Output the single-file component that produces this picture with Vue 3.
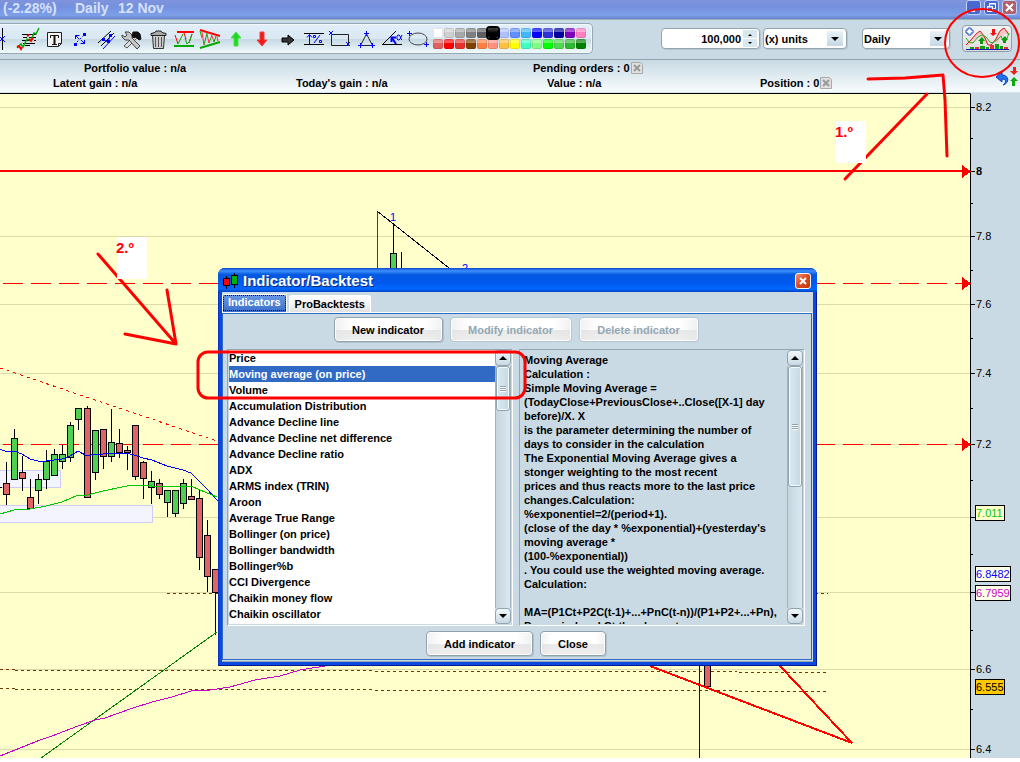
<script setup>
import { ref } from 'vue'

const quantity = ref('100,000')
const unit = ref('(x) units')
const period = ref('Daily')
const selected = ref('Moving average (on price)')
const colour = ref('#000000')

const palette = [
  '#ffffff', '#d0d0d0', '#a8a8a8', '#808080', '#606060', '#000000', '#b0c0ff',
  '#6090ff', '#40b8ff', '#0000ff', '#3030d8', '#0000a0', '#8000c0', '#ff80c0',
  '#e06060', '#ff0000', '#e83030', '#804000', '#ff8040', '#ff9080', '#ffc040',
  '#ffff00', '#40ffc0', '#80ff80', '#00ff00', '#50d850', '#30b830', '#008000',
]

const indicators = [
  'Price', 'Moving average (on price)', 'Volume', 'Accumulation Distribution',
  'Advance Decline line', 'Advance Decline net difference', 'Advance Decline ratio',
  'ADX', 'ARMS index (TRIN)', 'Aroon', 'Average True Range', 'Bollinger (on price)',
  'Bollinger bandwidth', 'Bollinger%b', 'CCI Divergence', 'Chaikin money flow',
  'Chaikin oscillator',
]

const description = [
  'Moving Average', 'Calculation :', 'Simple Moving Average =',
  '(TodayClose+PreviousClose+..Close([X-1] day', 'before)/X. X',
  'is the parameter determining the number of', 'days to consider in the calculation',
  'The Exponential Moving Average gives a', 'stonger weighting to the most recent',
  'prices and thus reacts more to the last price', 'changes.Calculation:',
  '%exponentiel=2/(period+1).', "(close of the day * %exponential)+(yesterday's",
  'moving average *', '(100-%exponential))', '. You could use the weighted moving average.',
  'Calculation:', '', 'MA=(P1Ct+P2C(t-1)+...+PnC(t-n))/(P1+P2+...+Pn),',
  'Pn=period and Ct the close at',
].join('\n')

const gridLines = [107, 236, 304, 373, 444, 517, 592, 669, 749]
const labels = [
  [107, '8.2'], [171, '8'], [236, '7.8'], [304, '7.6'], [373, '7.4'], [444, '7.2'],
  [669, '6.6'], [749, '6.4'],
]
const ticks = [107, 171, 236, 304, 373, 444, 517, 592, 669, 749]
const minorTicks = [138, 203, 270, 338, 408, 480, 554, 630, 709]
const tags = [
  { y: 505, w: 30, text: '7.011', fill: '#ffffcc', ink: '#00c800' },
  { y: 566, w: 36, text: '6.8482', fill: '#ffffe8', ink: '#0000ff' },
  { y: 585, w: 36, text: '6.7959', fill: '#ffffe8', ink: '#c800c8' },
  { y: 679, w: 30, text: '6.555', fill: '#ffc800', ink: '#000000' },
]

// x, high, low, body top, body bottom, rising
const candles = [
  [6, 462, 505, 483, 494, 0], [14, 429, 479, 438, 479, 1], [22, 456, 491, 472, 478, 0],
  [30, 479, 508, 497, 508, 0], [38, 474, 504, 479, 490, 1], [46, 450, 489, 461, 479, 1],
  [54, 449, 475, 454, 475, 1], [62, 445, 469, 454, 461, 1], [70, 422, 462, 425, 457, 1],
  [78, 408, 430, 408, 419, 1], [87, 406, 498, 408, 497, 0], [95, 430, 480, 430, 472, 1],
  [103, 429, 469, 429, 456, 0], [111, 409, 462, 442, 456, 1], [119, 429, 458, 443, 452, 0],
  [127, 446, 470, 450, 452, 0], [135, 425, 480, 425, 476, 0], [143, 461, 499, 462, 478, 0],
  [151, 471, 504, 481, 487, 1], [159, 479, 499, 483, 494, 0], [167, 490, 517, 490, 502, 1],
  [175, 490, 517, 490, 513, 1], [183, 479, 509, 483, 503, 1], [191, 479, 499, 496, 499, 0],
  [199, 490, 570, 498, 557, 0], [207, 520, 592, 535, 576, 0], [215, 569, 635, 569, 592, 0],
  [393, 224, 280, 253, 280, 1], [401, 252, 280, 270, 280, 1], [707, 660, 686, 660, 686, 0],
]

const tools = [
  'Crosshair', 'Sketch', 'Text', 'Segment', 'Parallel', 'Settings', 'Delete', 'Channel',
  'Wedge', 'Buy arrow', 'Sell arrow', 'Right arrow', 'Variation', 'Rectangle', 'Triangle',
  'Angle', 'Ellipse',
]
</script>

<template>
  <div class="page">
    <header class="titlebar">
      <span class="change">(-2.28%)</span>
      <span class="range">Daily</span>
      <span>12 Nov</span>
      <div class="win-buttons">
        <button type="button" aria-label="Minimize"><svg width="15" height="15"><path d="M4 11h5" stroke="#fff" stroke-width="2" /></svg></button>
        <button type="button" aria-label="Restore"><svg width="15" height="15" fill="none" stroke="#fff"><path d="M5.500 6V3.500h6v5h-2M5 4h7" /><path d="M3.500 6.500h5v5h-5zM3 7h6" /></svg></button>
        <button type="button" class="shut" aria-label="Close window"><svg width="15" height="15"><path d="M4 4l7 7M11 4l-7 7" stroke="#fff" stroke-width="2" /></svg></button>
      </div>
    </header>

    <div class="toolbar">
      <div class="tool-panel">
        <button v-for="(t, i) in tools" :key="t" type="button" class="tool" :aria-label="t">
          <svg viewBox="0 0 26 26" width="26" height="26" fill="none" stroke-width="1">
            <template v-if="i === 0">
              <path d="M13.500 2v22" stroke="#000" /><path d="M10 10l6 6M16 10l-6 6" stroke="#00f" />
            </template>
            <template v-else-if="i === 1">
              <path d="M7 8.500h14M8 11.500h4M14 11.500h7M7 14.500h10M19 14.500h2M8 17.500h12M10 19.500h5" stroke="#000" />
              <path d="M2 22l4-4 2 3 4-8 4 1 3-7 2 1 3-6" stroke="#0a0" stroke-width="1.500" />
              <path d="M2 21l2-1 2 3 1-2M14 13l2 2 2-3M12 10l2-1" stroke="#f00" stroke-width="2" />
            </template>
            <template v-else-if="i === 2">
              <path d="M6.500 6.500h14v11l-3 3h-11z" fill="#f4f4f4" stroke="#222" />
              <path d="M9.500 12V9.500h8V12M11 18.500h5" stroke="#111" /><path d="M13.500 9v9" stroke="#111" stroke-width="2" />
              <path d="M17.500 20v-2.500h3" stroke="#222" />
            </template>
            <template v-else-if="i === 3">
              <path d="M7 19L19 7" stroke="#00f" stroke-dasharray="2 2" />
              <path d="M7 17h3v3H7zM16 7h3v3h-3z" fill="#00f" />
              <path d="M8.500 9v4M8.500 9.500h4M8 9l4 4M17.500 18v-4M17.500 17.500h-4M18 18l-4-4" stroke="#00f" />
            </template>
            <template v-else-if="i === 4">
              <path d="M5 17L18 5M8 20L21 7" stroke="#000" /><path d="M10 23L22 10" stroke="#00f" />
              <path d="M9 12h3v3H9zM14 14h3v3h-3zM16 8h3v3h-3z" fill="#00f" /><path d="M11 14l4 2 2-6" stroke="#00f" />
            </template>
            <template v-else-if="i === 5">
              <path d="M5 20L16 9l3 2L8 22z" fill="#ddd" stroke="#555" />
              <path d="M6 6h4l3 3v3l8 8-3 3-8-9H6l-3-3V9l3 2 2-2z" fill="#c8c8c8" stroke="#444" />
              <path d="M14 6h5l2 2 1 5-2 1-3-3-2 1-2-2z" fill="#111" stroke="#111" />
            </template>
            <template v-else-if="i === 6">
              <path d="M7.500 9.500h12l-1 13h-10z" fill="#ccc" stroke="#333" />
              <path d="M10.500 11v10M13.500 11v10M16.500 11v10" stroke="#555" />
              <path d="M6 9.500V7.500l4-1 1-1.500h5l1 1.500 4 1v2z" fill="#aaa" stroke="#222" />
            </template>
            <template v-else-if="i === 7">
              <path d="M6 6h17" stroke="#f00" stroke-width="2" /><path d="M3 20h20" stroke="#0a0" stroke-width="2" />
              <path d="M4 9l3 9M13 7l2 6M21 8l-3 9" stroke="#f00" /><path d="M7 18l5-10M14 12l2 6 2-2M18 17l3-9" stroke="#0a0" />
            </template>
            <template v-else-if="i === 8">
              <path d="M3 4l20 6" stroke="#f00" stroke-width="2" /><path d="M3 22l20-6" stroke="#0a0" stroke-width="2" />
              <path d="M7 19l3-12M12 17l3-8M17 16l2-6M3 5l2 7" stroke="#0a0" /><path d="M5 6l2 13M10 8l2 9M15 10l2 6M20 11l1 4" stroke="#f33" />
            </template>
            <path v-else-if="i === 9" d="M13 6l5 6h-3v8h-4v-8H8z" fill="#20d820" stroke="#4ce04c" />
            <path v-else-if="i === 10" d="M13 20l5-6h-3V6h-4v8H8z" fill="#f01818" stroke="#f04040" />
            <path v-else-if="i === 11" d="M19 14l-6 5v-3H7v-4h6V9z" fill="#333" stroke="#000" />
            <template v-else-if="i === 12">
              <path d="M3 7.500h20M3 18.500h20" stroke="#000" />
              <path d="M8.500 18V9M6 11.500l2.500-3 2.500 3M13 17l6-8M12.500 9.500h2v2h-2zM18.500 14.500h2v2h-2z" stroke="#00f" />
            </template>
            <template v-else-if="i === 13">
              <path d="M4.500 8.500h17v11h-17z" stroke="#222" />
              <path d="M2 5l4 4M6 5l-4 4M19 16l4 4M23 16l-4 4" stroke="#00f" />
            </template>
            <template v-else-if="i === 14">
              <path d="M13.500 8l-6 11.500h12z" stroke="#222" />
              <path d="M13.500 5v5M11 7.500h5M7.500 17v5M5 19.500h5M19.500 17v5M17 19.500h5" stroke="#00f" />
            </template>
            <template v-else-if="i === 15">
              <path d="M3 18.500h20M4 18L17 5" stroke="#000" />
              <path d="M12.500 16v-4.500H17" stroke="#00f" stroke-width="2" /><path d="M13 12l4 6" stroke="#00f" stroke-width="2" />
              <path d="M23 9l-2 4-1 1h-1l-1-1v-3l1-1h1l1 1 1 3 1 1" stroke="#00f" />
            </template>
            <template v-else>
              <ellipse cx="13" cy="13" rx="9" ry="6" stroke="#444" stroke-width="1" />
              <path d="M4.500 5v5M2 7.500h5M21.500 16v5M19 18.500h5" stroke="#00f" />
            </template>
          </svg>
        </button>
        <div class="palette">
          <button
            v-for="c in palette" :key="c" type="button" class="swatch"
            :class="{ current: c === colour }" :style="{ backgroundColor: c }"
            :aria-label="'Colour ' + c" @click="colour = c"
          ></button>
        </div>
      </div>

      <div class="controls">
        <div class="spinner field">
          <input v-model="quantity" aria-label="Quantity">
          <div class="steps">
            <button type="button" aria-label="Increase"><svg width="6" height="3"><path d="M1 3l2-2 2 2z" /></svg></button>
            <button type="button" aria-label="Decrease"><svg width="6" height="3"><path d="M1 0l2 2 2-2z" /></svg></button>
          </div>
        </div>
        <div class="units field">
          <select v-model="unit" aria-label="Unit"><option>(x) units</option><option>Amount</option></select>
          <span class="drop"><svg width="8" height="4"><path d="M0 0h8l-4 4z" /></svg></span>
        </div>
        <div class="period field">
          <select v-model="period" aria-label="Period"><option>Daily</option><option>Weekly</option></select>
          <span class="drop"><svg width="8" height="4"><path d="M0 0h8l-4 4z" /></svg></span>
        </div>
        <button type="button" class="indicator-button" aria-label="Add indicator or backtest">
          <svg width="46" height="24" fill="none">
            <path d="M2 17l6-6 6-6 3-1 4 6 4 7-4 0-5-8-6 4-6 6zM30 14l4-8 4-4 5 1 3 5-5-1-3 3-5 6z" fill="#f5c8c8" />
            <path d="M2 18l5-5 5-6 4-3 4 5 4 9 3 0 5-6 4-8 4-3 3 4 2 3" stroke="#d02020" />
            <path d="M2 11l3 4 4 1 5-6 4-2 4 2 4 5 3 1 5-4 3-3 3 7 2-2 3-8" stroke="#20b020" />
            <path d="M4 1h3v2h2v3H7v2H4V6H2V3h2z" fill="#fff" stroke="#2050c0" />
            <path d="M18 10l3 4h-2v3h-3v-3h-2zM41 9l3 4h-2v3h-3v-3h-2z" fill="#0a9a0a" />
            <path d="M29 9l-3-3h2V2h3v4h2z" fill="#f01010" />
            <path d="M6 20h4v2H6zM16 19h5v3h-5zM22 20h3v2h-3zM31 17h4v5h-4zM36 19h3v3h-3z" fill="#10a010" />
            <path d="M11 20h4v2h-4zM26 18h4v4h-4zM40 20h4v2h-4z" fill="#f03030" />
            <path d="M2 22.500h43" stroke="#1818c0" />
          </svg>
        </button>
      </div>
    </div>

    <section class="info">
      <div class="info-row first">
        <span class="portfolio">Portfolio value : n/a</span>
        <span>Pending orders : 0<button type="button" class="cancel" aria-label="Cancel orders"><svg width="14" height="14"><path d="M1.500 1.500h9l2 2v9h-11z" fill="#e0e0e0" stroke="#aaa" /><path d="M4 4l6 6M10 4l-6 6" stroke="#999" stroke-width="2" /></svg></button></span>
      </div>
      <div class="info-row second">
        <span class="latent">Latent gain : n/a</span>
        <span class="today">Today's gain : n/a</span>
        <span class="value">Value : n/a</span>
        <span>Position : 0<button type="button" class="cancel" aria-label="Close position"><svg width="14" height="14"><path d="M1.500 1.500h9l2 2v9h-11z" fill="#e0e0e0" stroke="#aaa" /><path d="M4 4l6 6M10 4l-6 6" stroke="#999" stroke-width="2" /></svg></button></span>
      </div>
      <button type="button" class="reverse" aria-label="Reverse position">
        <svg width="24" height="22">
          <path d="M1 11l6-5v3c7 0 8 8 1 10 4-3 3-6-1-6v3z" fill="#2070f0" stroke="#1040b0" />
          <path d="M19 9l-4-4h3V1h3v4h2z" fill="#e82020" /><path d="M19 11l4 4h-3v5h-3v-5h-2z" fill="#10a810" />
        </svg>
      </button>
    </section>

    <main class="workspace">
      <div class="plot">
        <svg class="fill" shape-rendering="crispEdges">
          <g transform="translate(0 -94)">
            <line v-for="y in gridLines" :key="y" x1="0" x2="100%" :y1="y + 0.5" :y2="y + 0.5" stroke="#dcdcaa" />
            <g fill="#f4f4ff" stroke="#ccccf6">
              <rect x="-5" y="470.500" width="65" height="17" /><rect x="-5" y="505.500" width="157" height="17" />
            </g>
            <line x1="0" x2="100%" y1="171" y2="171" stroke="#f00" stroke-width="2" />
            <g stroke="#f00" stroke-dasharray="20 8" stroke-dashoffset="-3">
              <line x1="0" x2="100%" y1="283.500" y2="283.500" /><line x1="0" x2="100%" y1="444.500" y2="444.500" />
            </g>
            <path d="M0 368L217 441" stroke="#f00" stroke-dasharray="3 4" />
            <g fill="none" stroke="#703800" stroke-dasharray="3 3">
              <path d="M167 593.500H828" />
              <path d="M0 669.500h15M15 670.500H375M375 671.500H737M739 672.500H827" />
              <path d="M0 688.500h15M15 689.500H375M375 690.500H737M739 691.500H827" />
              <path d="M377.500 211v70" stroke-dasharray="none" />
            </g>
            <g v-for="c in candles" :key="c[0]" stroke="#000">
              <line :x1="c[0] + 0.5" :x2="c[0] + 0.5" :y1="c[1]" :y2="c[2]" />
              <rect v-if="c[0] !== 401" :x="c[0] - 2.5" :y="c[3] + 0.5" width="6" :height="c[4] - c[3]" :fill="c[5] ? '#50d050' : '#e06464'" />
            </g>
            <path d="M0 487.500h2" stroke="#000" />
            <g fill="none">
              <path d="M0 449L7 452 14 451 22 454 30 459 38 461 46 461 62 459 70 456 78 451 87 456 95 454 103 454 111 453 127 453 137 456 143 458 152 460 167 466 183 470 191 473 199 481 207 489 217 500 225 508" stroke="#00f" />
              <path d="M0 514L14 510 30 509 46 506 62 502 78 495 87 495 103 491 127 486 143 485 160 487 191 486 200 490 217 497" stroke="#00c800" />
              <path d="M41 758L217 632" stroke="#008000" />
              <path d="M0 756L15 750 40 740 52 736 78 726 95 720 105 718 130 709 152 702 172 697 191 691 210 690 230 687 255 680 280 676 300 670 325 666" stroke="#c800c8" />
              <path d="M699.500 660V760" stroke="#0000b0" /><path d="M377 211L449 268" stroke="#000" />
            </g>
            <g class="wave"><text x="390" y="221">1</text><text x="462" y="272">2</text></g>
            <path d="M650 666L852 743L780 666" fill="none" stroke="#f00" stroke-width="2" />
          </g>
        </svg>
      </div>
      <div class="axis">
        <svg class="fill over" shape-rendering="crispEdges">
          <g transform="translate(0 -94)">
            <path v-for="y in ticks" :key="y" :d="`M0 ${y + 0.5}h4`" stroke="#000" />
            <path v-for="y in minorTicks" :key="y" :d="`M0 ${y + 0.5}h2`" stroke="#000" />
            <path v-for="y in [171, 283, 444]" :key="y" :d="`M-9 ${y - 6}L0 ${y + 0.5}L-9 ${y + 7}z`" fill="#f00" />
            <text v-for="l in labels" :key="l[1]" x="5" :y="l[0] + 4" :class="{ strong: l[1] === '8' }">{{ l[1] }}</text>
            <g v-for="t in tags" :key="t.text">
              <rect x="4.500" :y="t.y + 0.5" :width="t.w - 1" height="15" :fill="t.fill" stroke="#000" />
              <text x="5" :y="t.y + 12" :fill="t.ink">{{ t.text }}</text>
            </g>
          </g>
        </svg>
      </div>
    </main>
    <footer class="edge"></footer>

    <section class="dialog" role="dialog" aria-label="Indicator/Backtest">
      <header class="dialog-title">
        <svg width="16" height="16"><path d="M3.500 3v13M11.500 0v15" stroke="#000" /><rect x=".5" y="5.500" width="6" height="7" fill="#f00" stroke="#000" /><rect x="8.500" y="2.500" width="6" height="9" fill="#00b000" stroke="#000" /></svg>
        <h1>Indicator/Backtest</h1>
        <button type="button" class="dialog-close" aria-label="Close dialog"><svg width="14" height="14"><path d="M4 4l6 6M10 4l-6 6" stroke="#fff" stroke-width="2" /></svg></button>
      </header>
      <div class="dialog-body">
        <nav class="tabs">
          <button type="button" class="tab active">Indicators</button>
          <button type="button" class="tab">ProBacktests</button>
        </nav>
        <div class="tab-panel">
          <div class="actions">
            <button type="button" class="btn new">New indicator</button>
            <button type="button" class="btn modify" disabled>Modify indicator</button>
            <button type="button" class="btn delete" disabled>Delete indicator</button>
          </div>
          <div class="panes">
            <div class="pane list-pane">
              <ul role="listbox" aria-label="Indicators">
                <li v-for="name in indicators" :key="name" role="option" :aria-selected="name === selected" :class="{ on: name === selected }" @click="selected = name">{{ name }}</li>
              </ul>
              <div class="scrollbar">
                <button type="button" aria-label="Scroll list up"><svg width="8" height="4"><path d="M0 4l4-4 4 4z" /></svg></button>
                <div class="track"><div class="thumb short"><i></i></div></div>
                <button type="button" aria-label="Scroll list down"><svg width="8" height="4"><path d="M0 0l4 4 4-4z" /></svg></button>
              </div>
            </div>
            <div class="pane">
              <p class="description">{{ description }}</p>
              <div class="scrollbar">
                <button type="button" aria-label="Scroll text up"><svg width="8" height="4"><path d="M0 4l4-4 4 4z" /></svg></button>
                <div class="track"><div class="thumb"><i></i></div></div>
                <button type="button" aria-label="Scroll text down"><svg width="8" height="4"><path d="M0 0l4 4 4-4z" /></svg></button>
              </div>
            </div>
          </div>
          <div class="actions bottom">
            <button type="button" class="btn add">Add indicator</button>
            <button type="button" class="btn close">Close</button>
          </div>
        </div>
      </div>
    </section>

    <svg class="marks" fill="none" stroke="#f00" stroke-width="3" stroke-linejoin="round">
      <ellipse cx="982" cy="43" rx="37" ry="34" stroke-width="2" />
      <path d="M868 79L905 78L943 75L945 100L947 156M845 179L871 152L927 94" stroke-linecap="round" />
      <path d="M98 254L176 344L125 334M167 290L176 344" stroke-linecap="round" />
      <rect x="198" y="352" width="327" height="46" rx="10" />
      <g stroke="none" fill="#fff"><rect x="836" y="121" width="30" height="42" /><rect x="117" y="237" width="30" height="42" /></g>
      <g class="step" stroke="none" fill="#f00"><text x="835" y="137">1.º</text><text x="116" y="253">2.º</text></g>
    </svg>
  </div>
</template>

<style>
body { margin: 0; background: #fff; }
</style>

<style scoped>
.page, .page * { box-sizing: border-box; }
.page {
  position: relative; display: flex; flex-direction: column; min-height: 100vh; overflow: hidden;
  background: #c9dae4; color: #000;
  font: bold 11px/14px "Liberation Sans", Arial, sans-serif;
}
button, input, select { font: inherit; color: inherit; padding: 0; margin: 0; border: 0; background: none; }
button { display: flex; align-items: center; justify-content: center; }
svg { display: block; flex: none; }

.titlebar {
  display: flex; height: 19px; padding: 0 3px; align-items: flex-start;
  background: linear-gradient(#8094dc, #7490de 35%, #7da0ea 80%, #6882c8);
  color: #d6e0fa; font-size: 14px; line-height: 16px;
}
.change { width: 72px; }
.range { width: 43px; }
.win-buttons { display: flex; gap: 3px; margin-left: auto; }
.win-buttons button { width: 15px; height: 15px; border: 1px solid #c4d2f6; border-radius: 3px; background: #4668d0; }
.win-buttons .shut { background: #b0606c; }

.toolbar {
  display: flex; justify-content: space-between; align-items: center; height: 40px; padding: 0 8px 2px 0;
  background: #c9dae4; border-top: 1px solid #9eb0bc;
}
.tool-panel {
  display: flex; align-items: center; height: 31px; padding-right: 6px;
  border: 1px solid #98a8b2; border-left: 0; border-radius: 0 5px 5px 0; box-shadow: inset -1px 1px #f2f9fc;
  background: linear-gradient(#e2effa, #d9e8f2 50%, #c5d8e3 52%, #f0fafc);
}
.tool { width: 26px; height: 26px; flex: none; }
.tool:first-child { margin-left: -11px; }
.palette { display: grid; grid-template-columns: repeat(14, 10px); gap: 1px; margin-left: 2px; }
.swatch { height: 10px; border-radius: 2px; background-image: linear-gradient(#ffffff40, #ffffff60 40%, #ffffff00 45%); box-shadow: inset 0 0 0 1px #0000001c; }
.swatch.current { outline: 2px solid #000; background-image: linear-gradient(#444, #000 50%); z-index: 1; }

.controls { display: flex; align-items: center; }
.field { display: flex; align-items: center; height: 21px; border: 1px solid #92a4b0; border-radius: 4px; background: #fff; box-shadow: 1px 1px #b6c6d0; }
.spinner { width: 99px; margin-right: 3px; padding: 0 2px; }
.spinner input { flex: 1; min-width: 0; text-align: right; outline: 0; }
.steps { display: flex; flex-direction: column; gap: 1px; margin-left: 2px; }
.steps button { width: 14px; height: 8px; background: #d8e7f0; }
.units { width: 84px; margin-right: 15px; }
.period { width: 88px; margin-right: 12px; }
.units, .period { position: relative; }
.field select { width: 100%; height: 100%; padding-left: 1px; appearance: none; outline: 0; }
.drop { position: absolute; right: 3px; top: 2px; bottom: 2px; width: 16px; display: flex; align-items: center; justify-content: center; background: linear-gradient(#e8f2f8, #c5d8e3); pointer-events: none; }
.indicator-button { width: 50px; height: 27px; border: 1px solid #8e9ea8; border-radius: 4px; background: linear-gradient(#f4f4f4, #dcdcdc); }

.info { position: relative; height: 34px; border-top: 1px solid #94a5b2; background: linear-gradient(#c9dae4, #f6fbfd 95%, #c9dae4); }
.info-row { display: flex; height: 15px; align-items: center; white-space: nowrap; }
.info-row span { display: flex; align-items: center; }
.first { padding-left: 84px; }
.portfolio { width: 449px; }
.second { padding-left: 53px; }
.latent { width: 243px; }
.today { width: 251px; }
.value { width: 213px; }
.cancel { width: 14px; height: 14px; }
.reverse { position: absolute; right: 1px; top: 6px; }

.workspace { display: grid; grid-template-columns: 1fr 50px; flex: 1; min-height: 665px; }
.plot { border-top: 1px solid #000; background: #ffffcc; min-width: 0; }
.axis { border-left: 1px solid #000; border-top: 1px solid #c9dae4; font-weight: normal; }
.fill { width: 100%; height: 664px; overflow: hidden; }
.over { overflow: visible; }
.strong { font-weight: bold; }
.wave { fill: #00f; font-weight: normal; }
.edge { height: 4px; background: #fff; }

.dialog {
  position: absolute; left: 218px; top: 268px; width: 599px; padding: 0 4px 4px;
  display: flex; flex-direction: column; border-radius: 7px 7px 0 0;
  background: #0a48e0; box-shadow: inset -1px -1px #001a90, inset 1px 0 #0831c8;
}
.dialog-title {
  display: flex; align-items: center; gap: 4px; height: 24px; margin: 0 -4px; padding: 2px 6px 0 5px; border-radius: 7px 7px 0 0;
  background: linear-gradient(#0a44c8, #3c90ff 12%, #0458e0 28%, #0058ee 60%, #0068ff 88%, #0040c0); color: #fff;
}
.dialog-title h1 { margin: 0; font-size: 15px; line-height: 20px; text-shadow: 1px 1px #0a2a80; }
.dialog-close { width: 16px; height: 16px; margin-left: auto; border: 1px solid #fff; border-radius: 3px; background: linear-gradient(135deg, #f09070, #dc4a20 50%, #c03808); }
.dialog-body { padding: 2px 1px 1px 0; background: #c9dae4; border-bottom: 1px solid #98a8b0; }
.tabs { display: flex; gap: 2px; align-items: flex-end; height: 19px; border-bottom: 1px solid #fff; }
.tab { height: 17px; padding: 0 5px; border: 1px solid #fff; border-bottom: 0; border-radius: 3px 3px 0 0; background: linear-gradient(#fff, #f4f4f4 50%, #e2e2e2); }
.tab.active { height: 18px; align-items: flex-start; color: #fff; background: linear-gradient(#6a98e4, #3a70cc); outline: 1px dotted #000; outline-offset: -2px; }
.tab-panel { border: 1px solid #316ac5; padding: 3px 6px 3px 4px; }
.actions { display: flex; justify-content: center; gap: 7px; }
.btn { height: 25px; border: 1px solid #90a2ae; border-radius: 4px; box-shadow: inset 0 0 0 1px #fff, 1px 1px #b2c2cc; background: linear-gradient(90deg, #e2e2e280, #fff0 15%, #fff0 85%, #e2e2e280), linear-gradient(#fff 52%, #e8e8e8 54%, #f0f0f0); }
.btn:disabled { color: #94a8b4; border-color: #b4c6d0; box-shadow: inset 0 0 0 1px #fff; }
.new { width: 109px; }
.modify { width: 122px; }
.delete { width: 120px; }
.add { width: 107px; }
.close { width: 66px; }
.panes { display: grid; grid-template-columns: 1fr 1fr; gap: 6px; height: 277px; margin: 7px 0 5px; }
.pane { display: flex; min-width: 0; overflow: hidden; border: 1px solid #94a6b2; border-right-color: #fff; border-bottom-color: #fff; padding: 0 1px 1px; }
.pane ul { flex: 1; margin: 0; padding: 0; list-style: none; overflow: hidden; background: #fff; white-space: nowrap; }
.pane li { height: 16px; line-height: 16px; }
.pane li.on { color: #fff; background: #316ac5; }
.description { flex: 1; min-width: 0; margin: 0; padding: 3px 0 0 3px; white-space: pre; overflow: hidden; }
.scrollbar { display: flex; flex-direction: column; width: 16px; flex: none; }
.scrollbar button { height: 16px; flex: none; border: 1px solid #92a4b0; border-radius: 4px; background: linear-gradient(#f0f8fc, #c9dae4); }
.track { flex: 1; border: solid #a2b3be; border-width: 0 1px; background: linear-gradient(90deg, #c5d6e0, #dbe8f0); }
.thumb { display: flex; align-items: center; justify-content: center; height: 121px; border: 1px solid #92a4b0; border-radius: 3px; box-shadow: inset 0 0 0 1px #f4fafc; background: linear-gradient(90deg, #dbeaf3, #c5d8e3); }
.thumb.short { height: 45px; }
.thumb i { width: 6px; height: 6px; background: repeating-linear-gradient(#8ea0ac 0 1px, #fff 1px 2px); }

.marks { position: absolute; inset: 0; width: 100%; height: 100%; pointer-events: none; }
.step { font: bold 15px "Liberation Sans Narrow", "Liberation Sans", sans-serif; }
</style>
